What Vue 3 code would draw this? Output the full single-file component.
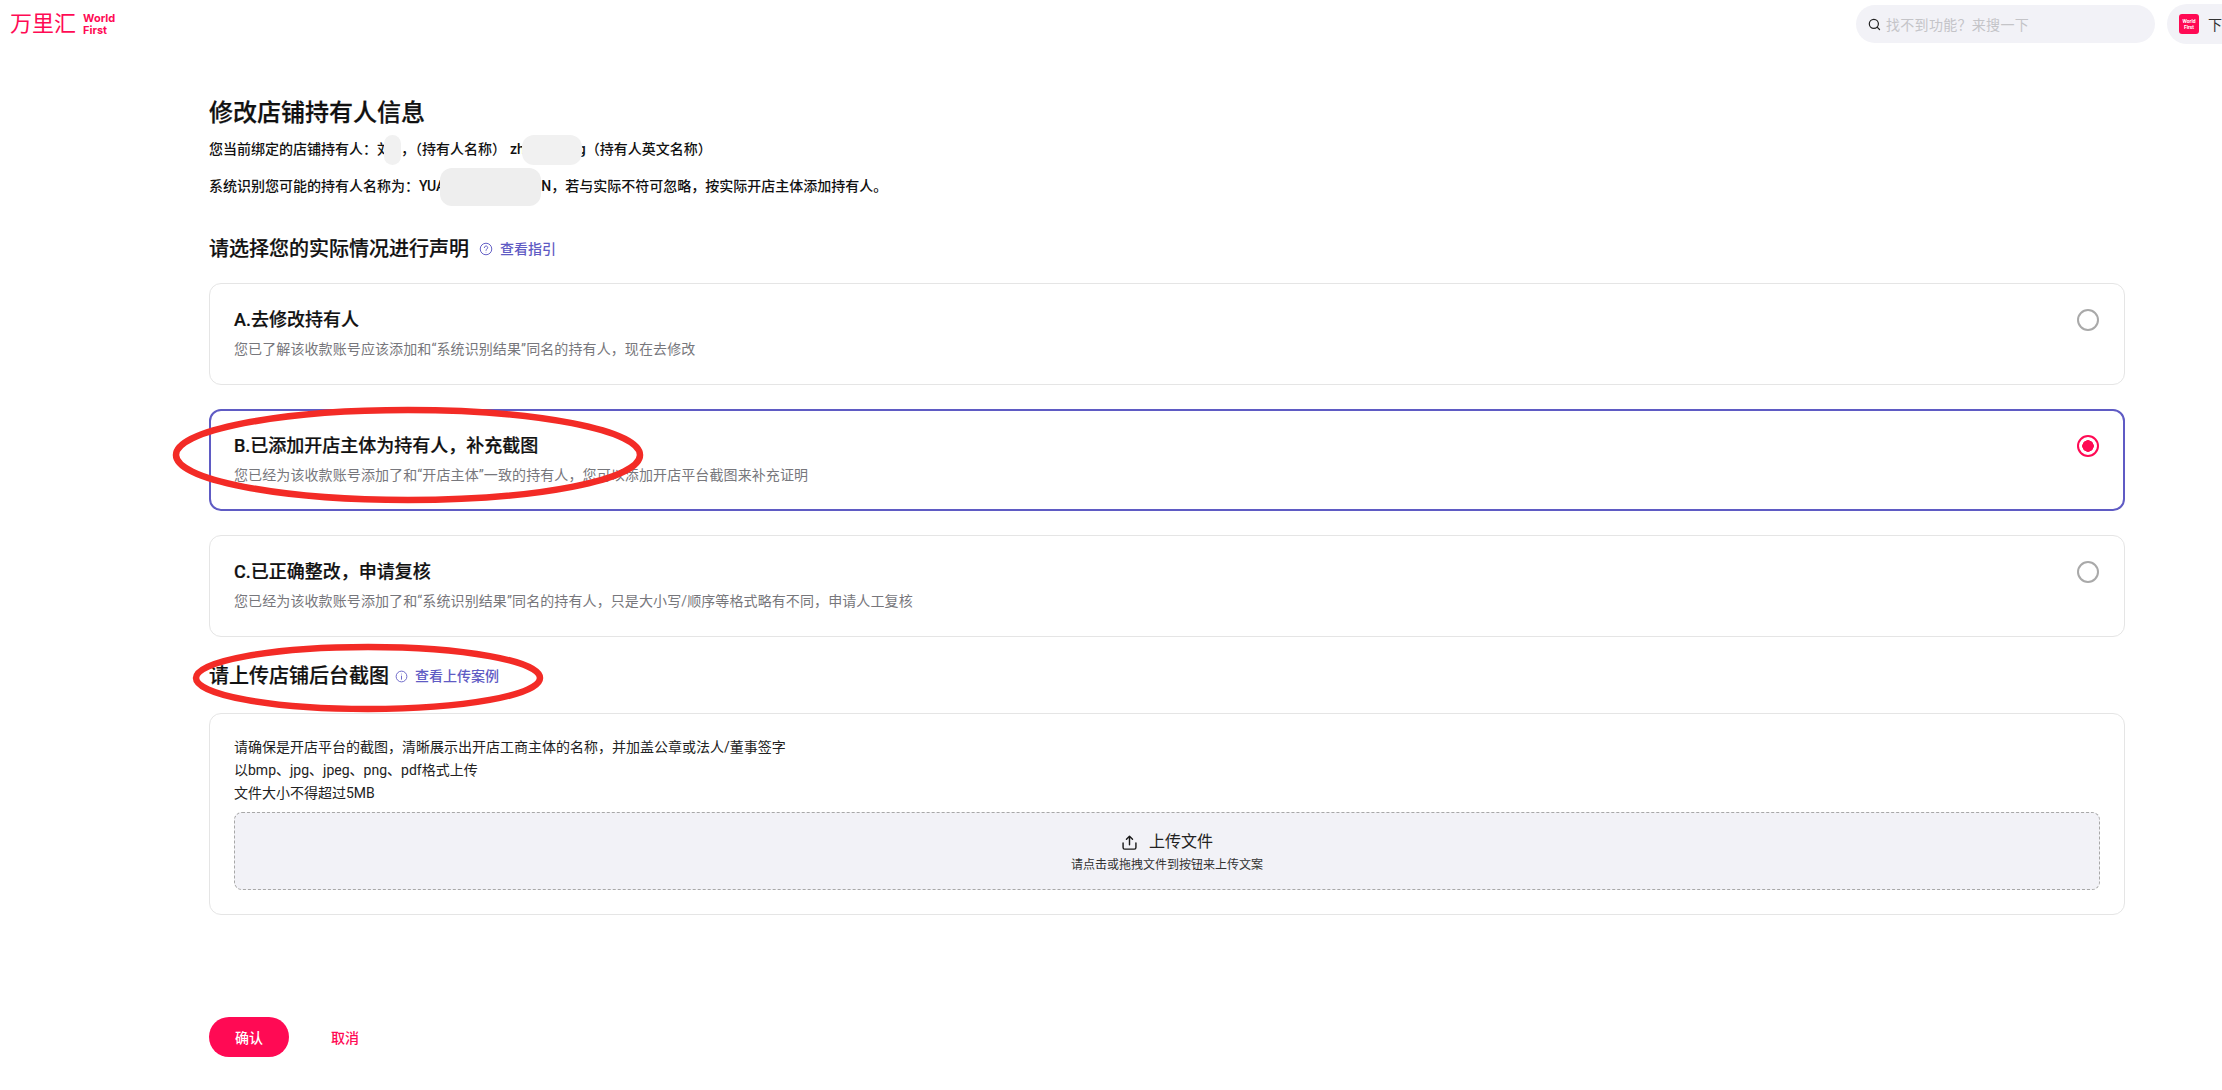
<template>
  <div class="page">
    <header class="topbar">
      <div class="logo">
        <span class="logo-cn">万里汇</span>
        <span class="logo-en">World<br />First</span>
      </div>
      <div class="topbar-right">
        <div class="search">
          <svg class="search-icon" viewBox="0 0 16 16" width="13" height="13" fill="none" stroke="#222" stroke-width="1.5">
            <circle cx="7.2" cy="7.2" r="5.6" />
            <path d="M11.2 11.2l3 3" stroke-linecap="round" />
          </svg>
          <span>找不到功能？来搜一下</span>
        </div>
        <div class="user">
          <span class="user-logo">World<br />First</span>
          <span class="user-name">下</span>
        </div>
      </div>
    </header>

    <main class="content">
      <h1 class="title">修改店铺持有人信息</h1>
      <p class="info first">您当前绑定的店铺持有人：<span>刘<i class="patch patch-name"></i>，</span>（持有人名称）<span class="en">zh<i class="patch patch-en"></i>g</span>（持有人英文名称）</p>
      <p class="info second">系统识别您可能的持有人名称为：YUA<i class="patch patch-sys"></i>N，若与实际不符可忽略，按实际开店主体添加持有人。</p>

      <div class="section-head declare">
        <h2>请选择您的实际情况进行声明</h2>
        <svg class="help" viewBox="0 0 16 16" width="14" height="14" fill="none" stroke="#5f5bc4" stroke-width="1.1">
          <circle cx="8" cy="8" r="6.6" />
          <path d="M6.1 6.4a1.9 1.9 0 1 1 2.9 1.6c-.7.4-1 .8-1 1.6" stroke-linecap="round" />
          <circle cx="8" cy="11.6" r=".5" fill="#5f5bc4" stroke="none" />
        </svg>
        <a class="link">查看指引</a>
      </div>

      <div class="options">
        <div
          v-for="option in options"
          :key="option.title"
          class="option"
          :class="{ active: option.active }"
        >
          <div>
            <div class="option-title">{{ option.title }}</div>
            <div class="option-desc">{{ option.desc }}</div>
          </div>
          <span class="radio" :class="{ checked: option.active }"></span>
        </div>
      </div>

      <div class="section-head upload-head">
        <h2>请上传店铺后台截图</h2>
        <svg class="help" viewBox="0 0 16 16" width="14" height="14" fill="none" stroke="#5f5bc4" stroke-width="1.1">
          <circle cx="8" cy="8" r="6.6" />
          <path d="M8 7.4v4" stroke-linecap="round" />
          <circle cx="8" cy="5" r=".6" fill="#5f5bc4" stroke="none" />
        </svg>
        <a class="link">查看上传案例</a>
      </div>

      <div class="upload-card">
        <p>请确保是开店平台的截图，清晰展示出开店工商主体的名称，并加盖公章或法人/董事签字</p>
        <p>以bmp、jpg、jpeg、png、pdf格式上传</p>
        <p>文件大小不得超过5MB</p>
        <div class="dropzone">
          <div class="drop-main">
            <svg viewBox="0 0 18 18" width="17" height="17" fill="none" stroke="#1a1a1a" stroke-width="1.5" stroke-linecap="round" stroke-linejoin="round">
              <path d="M9 11.5V2.5M5.8 5.5L9 2.3l3.2 3.2" />
              <path d="M2.2 9.5v4.8a1.7 1.7 0 0 0 1.7 1.7h10.2a1.7 1.7 0 0 0 1.7-1.7V9.5" />
            </svg>
            <span>上传文件</span>
          </div>
          <div class="drop-sub">请点击或拖拽文件到按钮来上传文案</div>
        </div>
      </div>

      <div class="actions">
        <button class="confirm">确认</button>
        <button class="cancel">取消</button>
      </div>
    </main>

    <!-- red annotation marks drawn over the screenshot -->
    <svg class="marks" width="2222" height="1090" viewBox="0 0 2222 1090" fill="none" stroke="#f32b26" stroke-width="6.5">
      <ellipse cx="408" cy="455" rx="232" ry="45" />
      <ellipse cx="368" cy="678" rx="172" ry="31" />
    </svg>
  </div>
</template>

<script setup>
const options = [
  {
    title: 'A.去修改持有人',
    desc: '您已了解该收款账号应该添加和“系统识别结果”同名的持有人，现在去修改',
    active: false
  },
  {
    title: 'B.已添加开店主体为持有人，补充截图',
    desc: '您已经为该收款账号添加了和“开店主体”一致的持有人，您可以添加开店平台截图来补充证明',
    active: true
  },
  {
    title: 'C.已正确整改，申请复核',
    desc: '您已经为该收款账号添加了和“系统识别结果”同名的持有人，只是大小写/顺序等格式略有不同，申请人工复核',
    active: false
  }
];
</script>

<style>
html,
body {
  background: #fff;
}
</style>

<style scoped>
.page {
  position: relative;
  width: 2222px;
  height: 1090px;
  overflow: hidden;
  background: #fff;
  color: #111;
  font-family: Roboto, "Noto Sans CJK SC", sans-serif;
}

.topbar {
  display: flex;
  justify-content: space-between;
  align-items: flex-start;
  height: 48px;
}

.logo {
  display: flex;
  align-items: center;
  gap: 7px;
  padding: 10px 0 0 10px;
  color: #ff0a54;
}

.logo-cn {
  font-size: 22px;
  line-height: 28px;
  font-weight: 400;
}

.logo-en {
  font-family: Inter, sans-serif;
  font-size: 11px;
  line-height: 12px;
  font-weight: 700;
}

.topbar-right {
  display: flex;
  gap: 12px;
  padding-top: 4px;
  margin-right: -40px;
}

.search {
  display: flex;
  align-items: center;
  gap: 5px;
  width: 299px;
  height: 38px;
  margin-top: 1px;
  padding-left: 12px;
  box-sizing: border-box;
  border-radius: 19px;
  background: #f2f2f7;
  color: #c4c4c8;
  font-size: 14px;
  letter-spacing: 0.3px;
}

.user {
  display: flex;
  align-items: center;
  gap: 9px;
  width: 95px;
  height: 40px;
  padding-left: 12px;
  box-sizing: border-box;
  border-radius: 20px;
  background: #f2f2f7;
  font-size: 14px;
  color: #333;
  white-space: nowrap;
}

.user-logo {
  flex: none;
  width: 20px;
  height: 20px;
  border-radius: 3px;
  background: #ff0a54;
  color: #fff;
  font-size: 5px;
  line-height: 6px;
  font-weight: 700;
  text-align: center;
  padding-top: 4px;
  box-sizing: border-box;
}

.content {
  padding: 0 97px 0 209px;
}

.title {
  margin: 48px 0 0;
  font-size: 24px;
  line-height: 34px;
  font-weight: 500;
  -webkit-text-stroke: 0.25px #111;
}

.info {
  margin: 0;
  font-size: 14px;
  line-height: 20px;
  font-weight: 500;
}

.info.first {
  margin-top: 9px;
}

.info.second {
  margin-top: 17px;
}

.patch {
  position: relative;
  display: inline-block;
  height: 30px;
  margin: -10px 0;
  vertical-align: middle;
  background: #f1f1f1;
  border-radius: 12px;
}

.patch-name {
  width: 17px;
  margin-left: -7px;
}

.en {
  margin-left: 4px;
}

.patch-en {
  width: 60px;
  margin-left: -3px;
  margin-right: -4px;
}

.patch-sys {
  width: 101px;
  height: 38px;
  margin-left: -5px;
  background: #eeeeee;
}

.section-head {
  display: flex;
  align-items: center;
}

.section-head h2 {
  margin: 0;
  font-size: 20px;
  line-height: 28px;
  font-weight: 500;
  -webkit-text-stroke: 0.2px #111;
}

.declare {
  margin-top: 39px;
}

.help {
  margin-left: 10px;
}

.link {
  margin-left: 7px;
  font-size: 14px;
  line-height: 20px;
  font-weight: 500;
  color: #5f5bc4;
}

.options {
  display: flex;
  flex-direction: column;
  gap: 24px;
  margin-top: 20px;
}

.option {
  display: flex;
  justify-content: space-between;
  align-items: flex-start;
  height: 102px;
  padding: 23px 24px 0;
  box-sizing: border-box;
  border: 1px solid #e5e5e5;
  border-radius: 12px;
}

.option.active {
  border: 2px solid #5f5bc4;
  padding: 22px 23px 0;
}

.option-title {
  font-size: 18px;
  line-height: 26px;
  font-weight: 500;
  -webkit-text-stroke: 0.2px #111;
}

.option-desc {
  margin-top: 6px;
  font-size: 14px;
  line-height: 20px;
  letter-spacing: 0.1px;
  color: #77777c;
}

.radio {
  flex: none;
  width: 22px;
  height: 22px;
  margin-top: 2px;
  margin-right: 1px;
  box-sizing: border-box;
  border: 2px solid #a9a9a9;
  border-radius: 50%;
}

.radio.checked {
  border-color: #ff0a54;
  background: radial-gradient(circle, #ff0a54 0, #ff0a54 5.5px, #fff 6px);
}

.upload-head {
  margin-top: 25px;
}

.upload-head .help {
  margin-left: 6px;
  width: 13px;
  height: 13px;
}

.upload-card {
  margin-top: 23px;
  height: 202px;
  padding: 22px 24px 0;
  box-sizing: border-box;
  border: 1px solid #e5e5e5;
  border-radius: 12px;
  font-size: 14px;
  color: #222;
}

.upload-card p {
  margin: 0;
  line-height: 23px;
}

.dropzone {
  display: flex;
  flex-direction: column;
  align-items: center;
  justify-content: center;
  height: 78px;
  margin-top: 7px;
  padding-top: 2px;
  box-sizing: border-box;
  border: 1px dashed #a8a8a8;
  border-radius: 8px;
  background: #f2f2f7;
}

.drop-main {
  display: flex;
  align-items: center;
  gap: 11px;
  font-size: 16px;
  line-height: 24px;
  color: #222;
}

.drop-sub {
  margin-top: 2px;
  font-size: 12px;
  line-height: 18px;
  color: #333;
}

.actions {
  display: flex;
  align-items: center;
  gap: 42px;
  margin-top: 102px;
}

.actions button {
  border: 0;
  padding: 0;
  font-family: inherit;
  font-size: 14px;
  font-weight: 500;
}

.confirm {
  width: 80px;
  height: 40px;
  border-radius: 20px;
  background: #ff0a54;
  color: #fff;
}

.cancel {
  background: none;
  color: #ff0a54;
}

.marks {
  position: absolute;
  left: 0;
  top: 0;
  pointer-events: none;
}
</style>
